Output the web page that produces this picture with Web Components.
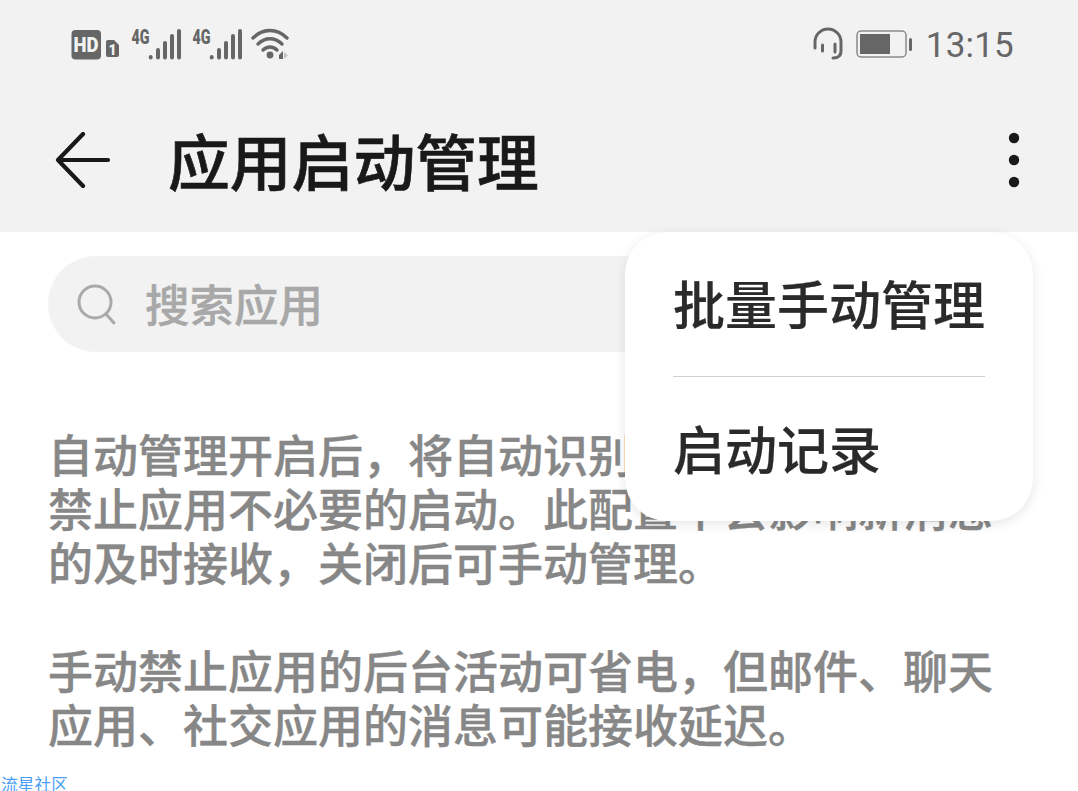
<!DOCTYPE html>
<html lang="zh-CN">
<head>
<meta charset="utf-8">
<title>应用启动管理</title>
<style>
  html, body { margin: 0; height: 100%; background: #fff; overflow: hidden; }
  body { position: relative; font-family: "Noto Sans CJK SC", "Noto Sans", sans-serif; }
</style>
</head>
<body>
  <status-bar time="13:15"></status-bar>
  <app-bar>应用启动管理</app-bar>
  <search-box>搜索应用</search-box>
  <info-text>
    <p>自动管理开启后，将自动识别并根据使用习惯，禁止应用不必要的启动。此配置不会影响新消息的及时接收，关闭后可手动管理。</p>
    <p>手动禁止应用的后台活动可省电，但邮件、聊天应用、社交应用的消息可能接收延迟。</p>
  </info-text>
  <popup-menu>
    <menu-row>批量手动管理</menu-row>
    <menu-row>启动记录</menu-row>
  </popup-menu>
  <water-mark>流星社区</water-mark>

<script>
class StatusBar extends HTMLElement {
  constructor() {
    super();
    this.attachShadow({ mode: "open" });
  }

  connectedCallback() {
    const time = this.getAttribute("time");
    const grey = "#666";
    this.shadowRoot.innerHTML = `
      <style>
        :host { display: flex; align-items: center; justify-content: space-between; height: 88px; background: #f2f2f2; padding: 0 64px 0 71px; }
        .side { display: flex; align-items: center; }
        svg { display: block; }
        .head { margin-right: 12px; }
        .batt { margin-right: 14px; }
        .time { font: 400 35px/44px Roboto, sans-serif; color: ${grey}; letter-spacing: 0.2px; margin-top: 4px; }
        text { font-family: Roboto, sans-serif; font-weight: 900; fill: ${grey}; }
      </style>
      <div class="side">
        <svg width="220" height="44" viewBox="71 22 220 44">
          <rect x="71.5" y="30" width="29.5" height="29.5" rx="4" fill="${grey}"/>
          <text x="73.500" y="52" font-size="21" textLength="25" lengthAdjust="spacingAndGlyphs" style="fill:#f2f2f2">HD</text>
          <path d="M108 40h6l5 5v10a2 2 0 0 1-2 2h-9a2 2 0 0 1-2-2V42a2 2 0 0 1 2-2z" fill="${grey}"/>
          <text x="108.500" y="55" font-size="14" style="fill:#f2f2f2">1</text>
          <text x="131.500" y="43.500" font-size="20" textLength="18" lengthAdjust="spacingAndGlyphs">4G</text>
          <g stroke="${grey}" stroke-width="4" stroke-linecap="round">
            <path d="M150.700 57v.5M158 50v7.500M165 43v14.500M172 36v21.500M179 31v26.500"/>
            <path d="M211.700 57v.5M219 50v7.500M226 43v14.500M233 36v21.500M240 31v26.500"/>
          </g>
          <text x="192.500" y="43.500" font-size="20" textLength="18" lengthAdjust="spacingAndGlyphs">4G</text>
          <g fill="none" stroke="${grey}" stroke-width="3.400" stroke-linecap="round">
            <path d="M253 38c10-10 24-10 34 0"/>
            <path d="M258 44c7-7 17-7 24 0"/>
            <path d="M263 50c4-4 10-4 14 0"/>
          </g>
          <circle cx="270" cy="55" r="3.400" fill="${grey}"/>
          <path d="M279 55l4-4v8h-4z" fill="${grey}"/>
          <path d="M284 52l4 3.500-4 3.500z" fill="#c4c4c4"/>
        </svg>
      </div>
      <div class="side">
        <svg class="head" width="32" height="34" viewBox="0 0 32 34">
          <g fill="none" stroke="${grey}" stroke-width="3" stroke-linecap="round">
            <path d="M3 21v-6a13 13 0 0 1 26 0v9c0 5-3 7-8 7"/>
            <path d="M10.500 18v6M23 17v8"/>
          </g>
        </svg>
        <svg class="batt" width="56" height="28" viewBox="0 0 56 28">
          <rect x="1" y="1" width="49" height="26" rx="4" fill="none" stroke="#8a8a8a" stroke-width="1.500"/>
          <rect x="4" y="4" width="30" height="20" fill="${grey}"/>
          <rect x="53" y="8" width="3" height="13" rx="1.500" fill="${grey}"/>
        </svg>
        <span class="time">${time}</span>
      </div>`;
  }
}

class AppBar extends HTMLElement {
  constructor() {
    super();
    this.attachShadow({ mode: "open" });
    this.shadowRoot.innerHTML = `
      <style>
        :host { display: flex; align-items: center; height: 144px; background: #f2f2f2; padding: 0 57px 0 55px; color: #191919; }
        .back { display: block; flex: none; margin-right: 57px; }
        .title { flex: 1; font-size: 61.800px; font-weight: 500; -webkit-text-stroke: 0.6px #191919; line-height: 80px; white-space: nowrap; padding-bottom: 3px; }
        .more { display: block; flex: none; }
      </style>
      <svg class="back" width="56" height="56" viewBox="0 0 56 56">
        <path d="M28 2L3 28l25 26M3 28h50" fill="none" stroke="#191919" stroke-width="4.200" stroke-linecap="round" stroke-linejoin="round"/>
      </svg>
      <span class="title"><slot></slot></span>
      <svg class="more" width="14" height="60" viewBox="0 0 14 60" fill="#191919">
        <circle cx="7" cy="8" r="5.200"/><circle cx="7" cy="30" r="5.200"/><circle cx="7" cy="52" r="5.200"/>
      </svg>`;
  }
}

class SearchBox extends HTMLElement {
  constructor() {
    super();
    this.attachShadow({ mode: "open" });
    this.shadowRoot.innerHTML = `
      <style>
        :host { display: flex; align-items: center; height: 96px; margin: 24px 48px 0; border-radius: 48px; background: #f2f2f2; padding-left: 29px; color: #a8a8a8; }
        svg { display: block; flex: none; margin-right: 27px; }
        span { font-size: 44.500px; font-weight: 500; -webkit-text-stroke: 0.4px #a8a8a8; line-height: 60px; padding-bottom: 3px; }
      </style>
      <svg width="41" height="44" viewBox="0 0 41 44">
        <circle cx="18" cy="20" r="16" fill="none" stroke="#a9a9a9" stroke-width="3"/>
        <path d="M29 32l8 9" fill="none" stroke="#a9a9a9" stroke-width="3" stroke-linecap="round"/>
      </svg>
      <span><slot></slot></span>`;
  }
}

class InfoText extends HTMLElement {
  constructor() {
    super();
    this.attachShadow({ mode: "open" });
    this.shadowRoot.innerHTML = `
      <style>
        :host { display: block; margin: 75px 0 0 48px; width: 950px; font-size: 45px; font-weight: 500; -webkit-text-stroke: 0.4px #878787; line-height: 54px; color: #878787; }
        ::slotted(p) { margin: 0 0 54px; }
      </style>
      <slot></slot>`;
  }
}

class PopupMenu extends HTMLElement {
  constructor() {
    super();
    this.attachShadow({ mode: "open" });
    this.shadowRoot.innerHTML = `
      <style>
        /* floats over the search box and the text */
        :host { position: absolute; left: 625px; top: 232px; width: 408px; height: 289px; display: flex; flex-direction: column; box-sizing: border-box; padding: 0 48px; border-radius: 42px; background: #fff; box-shadow: 0 3px 12px rgba(0, 0, 0, 0.1); }
      </style>
      <slot></slot>`;
  }
}

class MenuRow extends HTMLElement {
  constructor() {
    super();
    this.attachShadow({ mode: "open" });
    this.shadowRoot.innerHTML = `
      <style>
        :host { display: flex; align-items: center; box-sizing: content-box; height: 141px; padding-bottom: 3px; font-size: 52px; font-weight: 500; -webkit-text-stroke: 0.2px #2a2a2a; color: #2a2a2a; white-space: nowrap; }
        :host(:not(:last-child)) { border-bottom: 1px solid #d0d0d0; }
      </style>
      <slot></slot>`;
  }
}

class WaterMark extends HTMLElement {
  constructor() {
    super();
    this.attachShadow({ mode: "open" });
    this.shadowRoot.innerHTML = `
      <style>
        :host { position: absolute; left: 1px; bottom: 0; font-size: 16.800px; line-height: 14px; color: #4a9ff5; }
      </style>
      <slot></slot>`;
  }
}

customElements.define("status-bar", StatusBar);
customElements.define("app-bar", AppBar);
customElements.define("search-box", SearchBox);
customElements.define("info-text", InfoText);
customElements.define("popup-menu", PopupMenu);
customElements.define("menu-row", MenuRow);
customElements.define("water-mark", WaterMark);
</script>
</body>
</html>
